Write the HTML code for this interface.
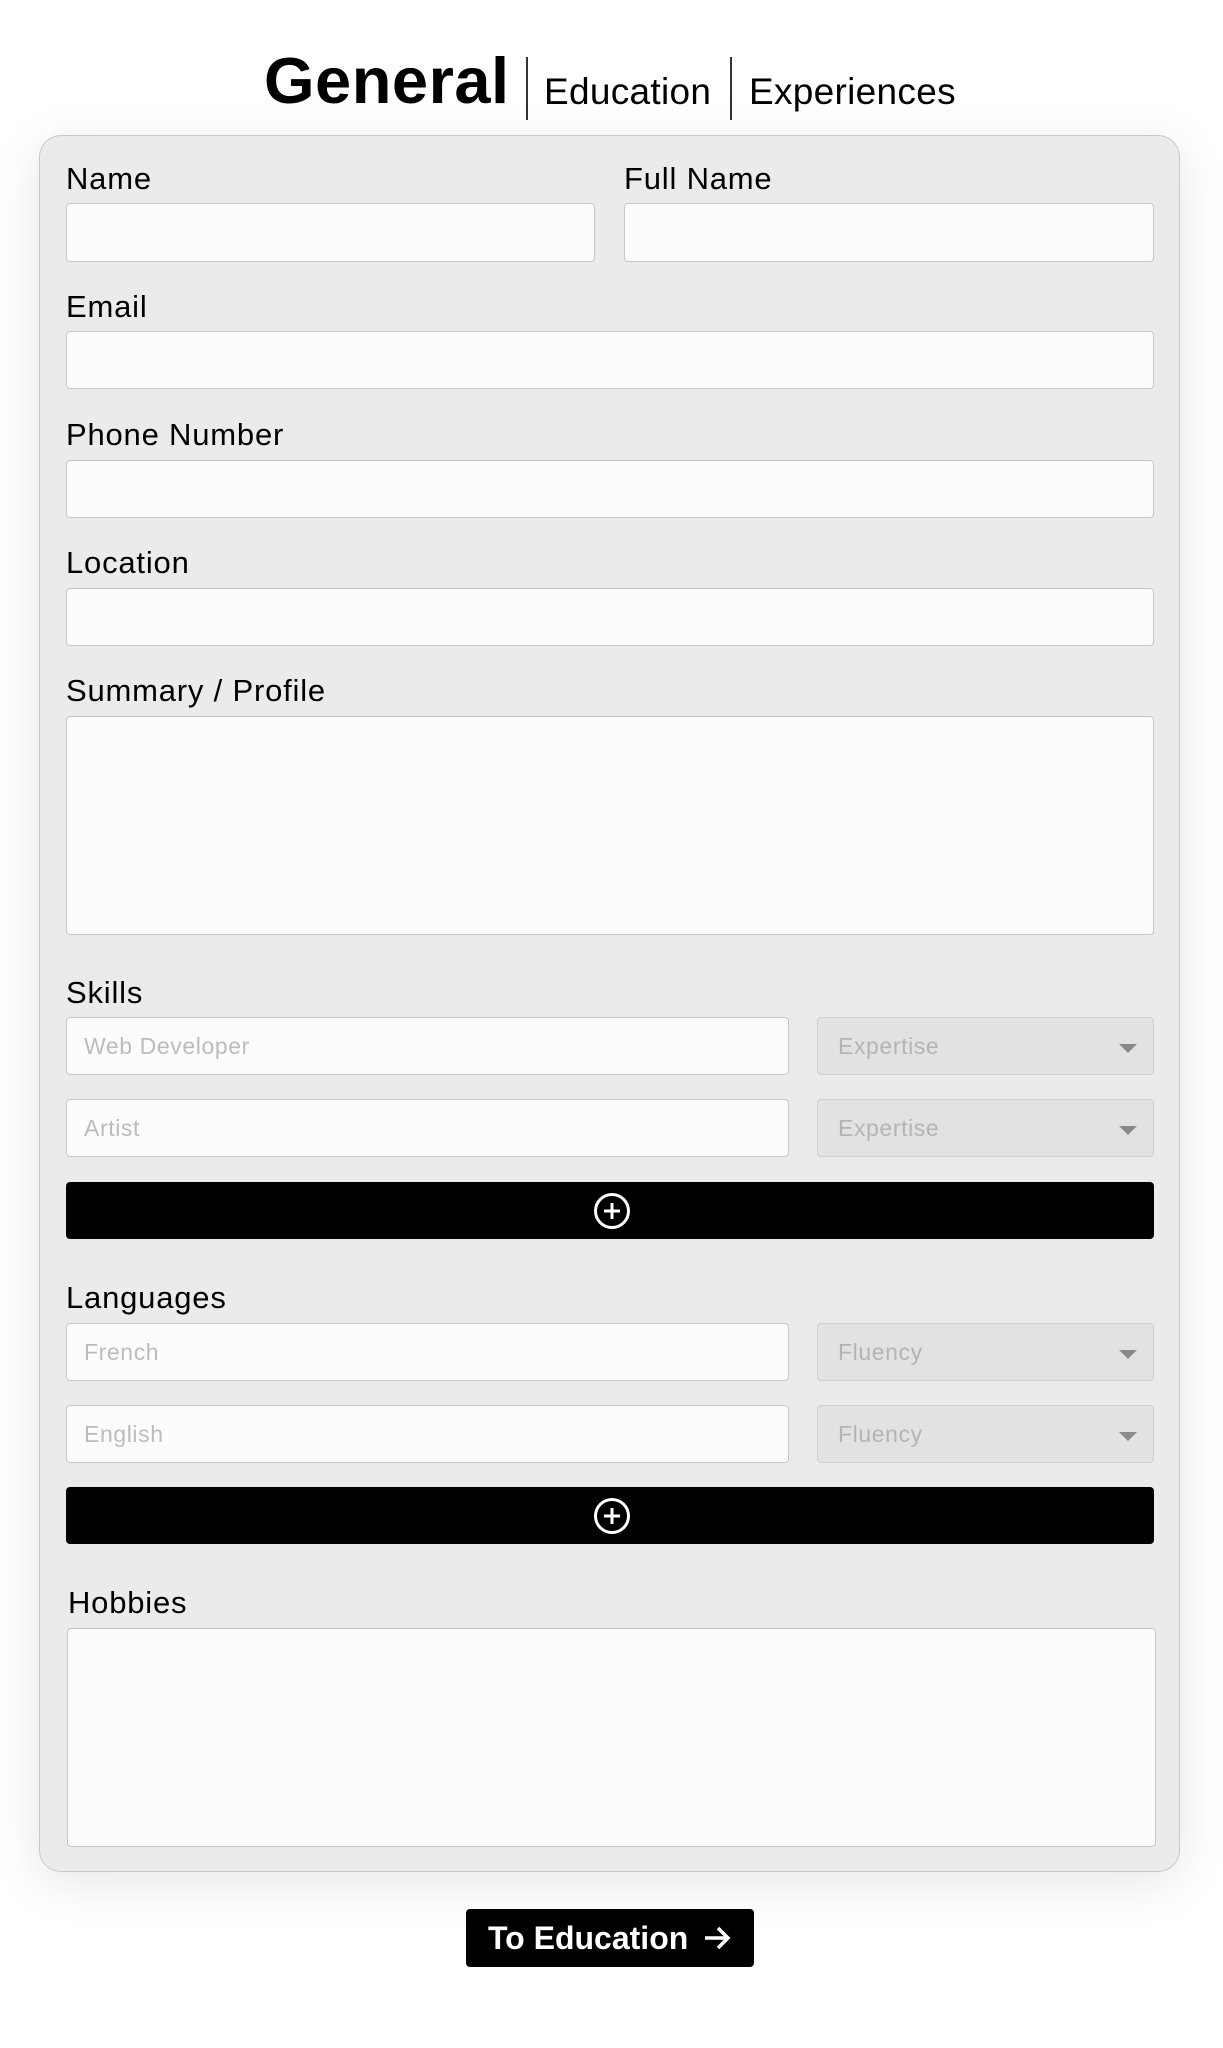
<!DOCTYPE html>
<html><head><meta charset="utf-8"><style>
*{box-sizing:border-box;margin:0;padding:0}
body{width:1223px;height:2048px;background:#fff;font-family:"Liberation Sans",sans-serif;position:relative;overflow:hidden;color:#000}
.a{position:absolute}
.card{left:39px;top:135px;width:1141px;height:1737px;background:#ebebeb;border:1.5px solid #c8c8c8;border-radius:22px;box-shadow:0 10px 50px rgba(0,0,0,0.10)}
.lbl{font-size:31px;line-height:1;left:66px;letter-spacing:0.8px}
.in{background:#fcfcfc;border:1.5px solid #c8c8c8;border-radius:4px}
.ph{font-size:23px;color:#bcbcbc;padding-left:17px;display:flex;align-items:center;letter-spacing:0.6px}
.sel{background:#e2e2e2;border:1.5px solid #cfcfcf;border-radius:4px;font-size:23px;color:#b4b4b4;padding-left:20px;display:flex;align-items:center;letter-spacing:0.6px}
.sel:after{content:"";position:absolute;right:16px;top:26px;border-left:9px solid transparent;border-right:9px solid transparent;border-top:9px solid #8a8a8a}
.btn{background:#000;border-radius:4px;left:66px;width:1088px;height:57px}
.sep{width:1.5px;background:#333;top:57px;height:63px}
</style></head><body>
<div class="a" style="left:264px;top:48px;font-size:65px;font-weight:bold;line-height:1;letter-spacing:0.5px">General</div>
<div class="a sep" style="left:526px"></div>
<div class="a" style="left:544px;top:73px;font-size:37px;line-height:1;letter-spacing:0.3px">Education</div>
<div class="a sep" style="left:730px"></div>
<div class="a" style="left:749px;top:73px;font-size:37px;line-height:1;letter-spacing:0.3px">Experiences</div>

<div class="a card"></div>

<div class="a lbl" style="top:163px">Name</div>
<div class="a lbl" style="top:163px;left:624px">Full Name</div>
<div class="a in" style="left:66px;top:203px;width:529px;height:59px"></div>
<div class="a in" style="left:624px;top:203px;width:530px;height:59px"></div>

<div class="a lbl" style="top:291px">Email</div>
<div class="a in" style="left:66px;top:331px;width:1088px;height:58px"></div>

<div class="a lbl" style="top:419px">Phone Number</div>
<div class="a in" style="left:66px;top:460px;width:1088px;height:58px"></div>

<div class="a lbl" style="top:547px">Location</div>
<div class="a in" style="left:66px;top:588px;width:1088px;height:58px"></div>

<div class="a lbl" style="top:675px">Summary / Profile</div>
<div class="a in" style="left:66px;top:716px;width:1088px;height:219px"></div>

<div class="a lbl" style="top:977px">Skills</div>
<div class="a in ph" style="left:66px;top:1017px;width:723px;height:58px">Web Developer</div>
<div class="a sel" style="left:817px;top:1017px;width:337px;height:58px">Expertise</div>
<div class="a in ph" style="left:66px;top:1099px;width:723px;height:58px">Artist</div>
<div class="a sel" style="left:817px;top:1099px;width:337px;height:58px">Expertise</div>
<div class="a btn" style="top:1182px"><svg class="a" style="left:527px;top:10px" width="38" height="38" viewBox="0 0 38 38"><circle cx="19" cy="19" r="16.5" fill="none" stroke="#fff" stroke-width="3"/><path d="M19 11v16M11 19h16" stroke="#fff" stroke-width="3"/></svg></div>

<div class="a lbl" style="top:1282px">Languages</div>
<div class="a in ph" style="left:66px;top:1323px;width:723px;height:58px">French</div>
<div class="a sel" style="left:817px;top:1323px;width:337px;height:58px">Fluency</div>
<div class="a in ph" style="left:66px;top:1405px;width:723px;height:58px">English</div>
<div class="a sel" style="left:817px;top:1405px;width:337px;height:58px">Fluency</div>
<div class="a btn" style="top:1487px"><svg class="a" style="left:527px;top:10px" width="38" height="38" viewBox="0 0 38 38"><circle cx="19" cy="19" r="16.5" fill="none" stroke="#fff" stroke-width="3"/><path d="M19 11v16M11 19h16" stroke="#fff" stroke-width="3"/></svg></div>

<div class="a lbl" style="top:1587px;left:68px">Hobbies</div>
<div class="a in" style="left:67px;top:1628px;width:1089px;height:219px"></div>

<div class="a" style="left:466px;top:1909px;width:288px;height:58px;background:#000;border-radius:4px;color:#fff;font-size:32px;font-weight:bold;display:flex;align-items:center;padding-left:22px">To Education<svg style="margin-left:14px" width="30" height="30" viewBox="0 0 30 30"><path d="M3 15h23M16 5l10 10-10 10" fill="none" stroke="#fff" stroke-width="3.5"/></svg></div>
</body></html>
